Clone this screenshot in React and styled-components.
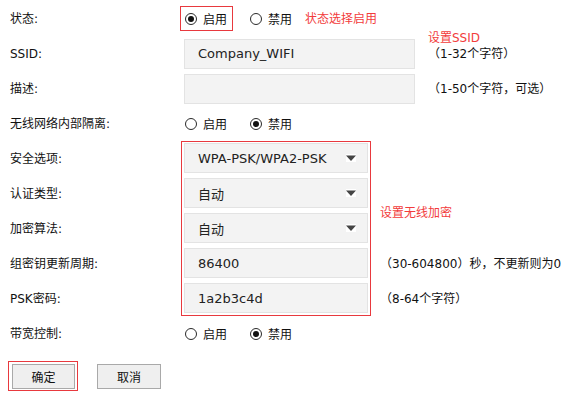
import React from 'react';
import styled, { createGlobalStyle } from 'styled-components';

const Global = createGlobalStyle`
  *, *::before, *::after { box-sizing: border-box; }
  html, body { margin: 0; padding: 0; background: #fff; }
  body {
    font-family: "DejaVu Sans", "Noto Sans CJK SC", sans-serif;
    font-size: 12px;
    color: #111;
  }
`;

const Page = styled.div`
  width: 576px;
  height: 394px;
  overflow: hidden;
  padding-top: 1px;
`;

const Row = styled.div`
  display: flex;
  align-items: center;
  height: 35px;
`;

const Label = styled.div`
  width: 180px;
  flex-shrink: 0;
  padding-left: 10px;
  line-height: 16px;
  white-space: nowrap;
`;

const RadioGroup = styled.div`
  display: flex;
  align-items: center;
`;

const Option = styled.label`
  display: inline-flex;
  align-items: center;
  gap: 6px;
  height: 25px;
  padding: 0 5px 0 4px;
  border: 1px solid ${(p) => (p.$marked ? '#e8393e' : 'transparent')};
  white-space: nowrap;
  & + & {
    margin-left: 12px;
  }
`;

const Dot = styled.span`
  position: relative;
  width: 12px;
  height: 12px;
  flex-shrink: 0;
  border-radius: 50%;
  border: 1px solid #2a2a2a;
  background: #fff;
  &::after {
    content: '';
    position: absolute;
    inset: 2px;
    border-radius: 50%;
    background: ${(p) => (p.$on ? '#111' : 'transparent')};
  }
`;

const RedNote = styled.span`
  color: #f23c3c;
  font-size: 12px;
  line-height: 16px;
  white-space: nowrap;
  margin-left: ${(p) => p.$ml || 0}px;
`;

const TextInput = styled.input`
  width: ${(p) => p.$w}px;
  height: 30px;
  margin: 0 0 0 ${(p) => p.$ml ?? 4}px;
  padding: 0 0 0 13px;
  border: 1px solid #e3e3e3;
  background: #f3f3f3;
  font-family: "DejaVu Sans", "Noto Sans CJK SC", sans-serif;
  font-size: 13px;
  color: #222;
  outline: none;
  border-radius: 0;
`;

const Select = styled.div`
  display: flex;
  align-items: center;
  justify-content: space-between;
  width: 184px;
  height: 30px;
  padding: 0 11px 0 13px;
  border: 1px solid #e3e3e3;
  background: #f3f3f3;
  font-size: 13px;
  color: #222;
  white-space: nowrap;
`;

const Hint = styled.div`
  position: relative;
  margin-left: ${(p) => p.$ml || 0}px;
  line-height: 16px;
  white-space: nowrap;
`;

const Callout = styled(RedNote)`
  position: absolute;
  left: 0;
  bottom: 100%;
`;

const SecGrid = styled.div`
  display: grid;
  grid-template-columns: 180px 191px 1fr;
  grid-template-rows: repeat(5, 35px);
`;

const GridLabel = styled(Label)`
  grid-column: 1;
  grid-row: ${(p) => p.$row};
  align-self: center;
`;

const Frame = styled.div`
  grid-column: 2;
  grid-row: 1 / 6;
  margin-left: 1px;
  width: 190px;
  border: 1px solid #e8393e;
  padding: 1px 2px 2px 2px;
  display: flex;
  flex-direction: column;
  gap: 5px;
`;

const GridNote = styled.div`
  grid-column: 3;
  grid-row: ${(p) => p.$row};
  align-self: center;
  padding-left: 9px;
  margin-top: ${(p) => p.$mt || 0}px;
  line-height: 16px;
  white-space: nowrap;
`;

const ButtonBar = styled.div`
  display: flex;
  align-items: center;
  margin-top: 10px;
  padding-left: 8px;
`;

const Highlight = styled.div`
  border: 1px solid #e8393e;
  padding: 2px 2px 1px 3px;
`;

const Button = styled.button`
  width: ${(p) => p.$w || 63}px;
  height: 25px;
  margin: 0 0 0 ${(p) => p.$ml || 0}px;
  padding: 0;
  border: 1px solid #a9a9a9;
  background: #efefef;
  font-family: "DejaVu Sans", "Noto Sans CJK SC", sans-serif;
  font-size: 12px;
  color: #111;
  border-radius: 0;
`;

const Arrow = () => (
  <svg width="10" height="8" viewBox="0 0 10 8">
    <rect width="10" height="8" fill="#fff" />
    <polygon points="0,1.5 10,1.5 5,7" fill="#444" />
  </svg>
);

const Radio = ({ on, marked, children }) => (
  <Option $marked={marked}>
    <Dot $on={on} />
    {children}
  </Option>
);

export default function App() {
  return (
    <>
      <Global />
      <Page>
        <Row>
          <Label>状态:</Label>
          <RadioGroup>
            <Radio on marked>启用</Radio>
            <Radio>禁用</Radio>
          </RadioGroup>
          <RedNote $ml={7}>状态选择启用</RedNote>
        </Row>
        <Row>
          <Label>SSID:</Label>
          <TextInput $w={231} readOnly defaultValue="Company_WIFI" />
          <Hint $ml={13}>
            <Callout>设置SSID</Callout>
            （1-32个字符）
          </Hint>
        </Row>
        <Row>
          <Label>描述:</Label>
          <TextInput $w={231} readOnly defaultValue="" />
          <Hint $ml={13}>（1-50个字符，可选）</Hint>
        </Row>
        <Row>
          <Label>无线网络内部隔离:</Label>
          <RadioGroup>
            <Radio>启用</Radio>
            <Radio on>禁用</Radio>
          </RadioGroup>
        </Row>
        <SecGrid>
          <GridLabel $row={1}>安全选项:</GridLabel>
          <GridLabel $row={2}>认证类型:</GridLabel>
          <GridLabel $row={3}>加密算法:</GridLabel>
          <GridLabel $row={4}>组密钥更新周期:</GridLabel>
          <GridLabel $row={5}>PSK密码:</GridLabel>
          <Frame>
            <Select>
              <span>WPA-PSK/WPA2-PSK</span>
              <Arrow />
            </Select>
            <Select>
              <span>自动</span>
              <Arrow />
            </Select>
            <Select>
              <span>自动</span>
              <Arrow />
            </Select>
            <TextInput $w={184} $ml={0} readOnly defaultValue="86400" />
            <TextInput $w={184} $ml={0} readOnly defaultValue="1a2b3c4d" />
          </Frame>
          <GridNote $row="2 / 4" $mt={3}>
            <RedNote>设置无线加密</RedNote>
          </GridNote>
          <GridNote $row={4}>（30-604800）秒，不更新则为0</GridNote>
          <GridNote $row={5}>（8-64个字符）</GridNote>
        </SecGrid>
        <Row>
          <Label>带宽控制:</Label>
          <RadioGroup>
            <Radio>启用</Radio>
            <Radio on>禁用</Radio>
          </RadioGroup>
        </Row>
        <ButtonBar>
          <Highlight>
            <Button>确定</Button>
          </Highlight>
          <Button $w={64} $ml={19}>取消</Button>
        </ButtonBar>
      </Page>
    </>
  );
}
